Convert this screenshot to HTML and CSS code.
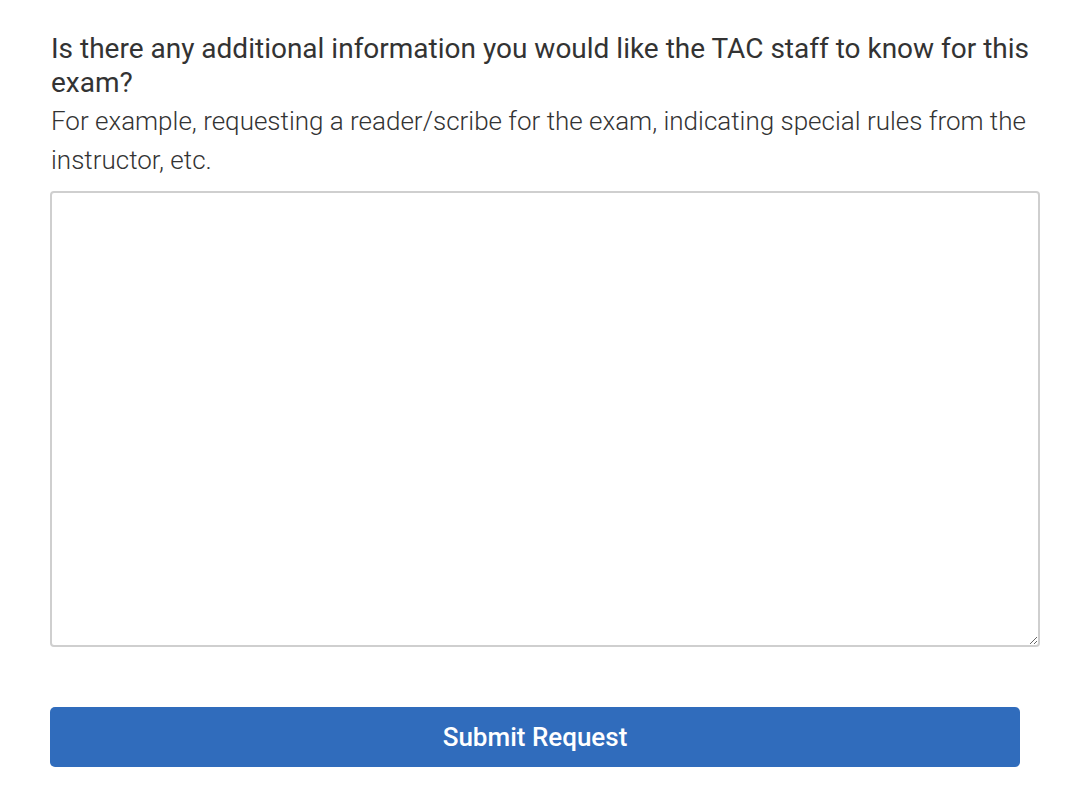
FILE: index.html
```html
<!DOCTYPE html>
<html lang="en">
<head>
<meta charset="utf-8">
<title>Additional information</title>
<link rel="stylesheet" href="styles.css">
</head>
<body>
<form class="form">
  <label class="question" for="info">Is there any additional information you would like the TAC staff to know for this exam?</label>
  <p class="hint">For example, requesting a reader/scribe for the exam, indicating special rules from the instructor, etc.</p>
  <textarea id="info" class="field"></textarea>
  <button type="button" class="submit">Submit Request</button>
</form>
</body>
</html>
```
FILE: styles.css
```css
html, body {
  margin: 0;
  padding: 0;
  background: #fff;
}
body {
  font-family: Roboto, "Liberation Sans", sans-serif;
  color: #333;
}
.form {
  display: flex;
  flex-direction: column;
  padding: 32px 40px 0 50px;
}
.question {
  display: block;
  font-size: 28px;
  line-height: 33.6px;
  font-weight: 400;
  color: #333;
  padding-left: 1px;
}
.hint {
  margin: 3px 0 0;
  font-size: 26px;
  line-height: 39px;
  font-weight: 300;
  color: #333;
  padding-left: 1px;
}
.field {
  box-sizing: border-box;
  display: block;
  width: 990px;
  height: 456px;
  margin-top: 11px;
  border: 2px solid #cfcfcf;
  border-radius: 4px;
  resize: vertical;
  font: inherit;
  padding: 8px;
}
.submit {
  width: 970px;
  height: 60px;
  margin-top: 60px;
  border: none;
  border-radius: 5px;
  background: #306cbc;
  color: #fff;
  font-family: Roboto, "Liberation Sans", sans-serif;
  font-size: 26px;
  font-weight: 500;
  cursor: pointer;
}
```
